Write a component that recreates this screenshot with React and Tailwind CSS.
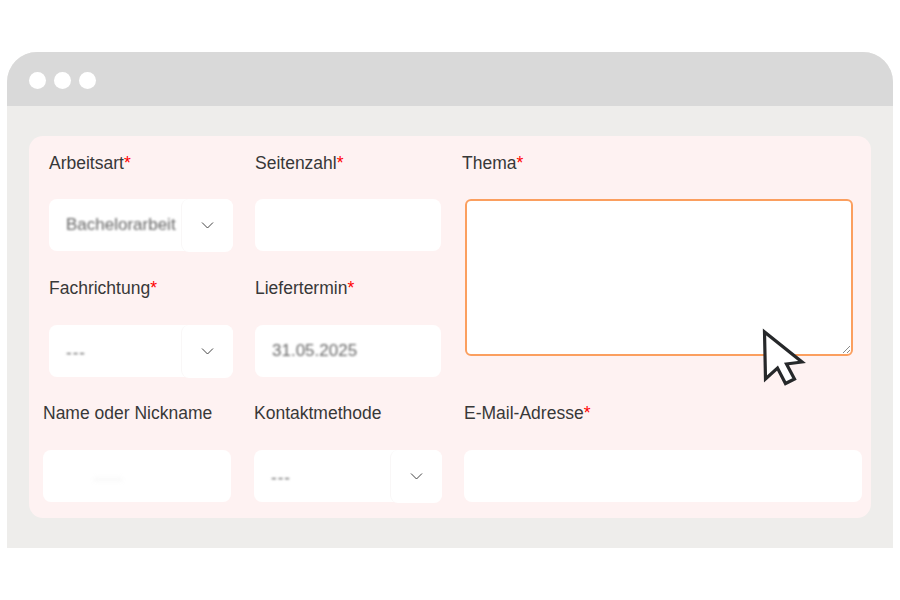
import React from 'react'

const FONT = 'font-["Liberation_Sans",Arial,sans-serif]'

function Label({ text, required, className = '' }) {
  return (
    <div className={`h-6 pt-px text-[17.5px] leading-6 text-[#383838] whitespace-nowrap ${className}`}>
      {text}
      {required && <span className="text-[#f00]">*</span>}
    </div>
  )
}

function Smudge({ className = '' }) {
  return <div className={`absolute rounded-full bg-[#f7f7f7] blur-[2px] ${className}`} />
}

function Select({ value, dash }) {
  return (
    <div className="relative h-[52px] rounded-lg bg-white flex items-center">
      <span className={`pl-[17px] text-[17px] text-[#666] blur-[1px] whitespace-nowrap ${dash ? 'pt-1 tracking-[1px]' : ''}`}>{value}</span>
      <div className="absolute right-0 top-0 h-[53px] w-[52px] rounded-lg bg-white border-l border-[#f9f7f7] flex items-center justify-center">
        <svg width="13" height="13" viewBox="0 0 13 13" fill="none" stroke="#444" strokeWidth="1">
          <path d="M1 3.5 6.5 9 12 3.5" />
        </svg>
      </div>
    </div>
  )
}

function Input({ value, children, className = '' }) {
  return (
    <div className={`relative h-[52px] rounded-lg bg-white flex items-center pl-[17px] overflow-hidden ${className}`}>
      {value && <span className="text-[17px] text-[#666] blur-[1px] whitespace-nowrap">{value}</span>}
      {children}
    </div>
  )
}

export default function App() {
  return (
    <div className={`w-[900px] h-[600px] bg-white pt-[52px] px-[7px] relative overflow-hidden ${FONT}`}>
      <div className="h-[496px] rounded-t-[30px] overflow-hidden bg-[#eeedeb]">
        <div className="h-[54px] bg-[#d9d9d9] flex items-center gap-2 pl-[22px] pt-[2px]">
          <span className="w-[17px] h-[17px] rounded-full bg-white" />
          <span className="w-[17px] h-[17px] rounded-full bg-white" />
          <span className="w-[17px] h-[17px] rounded-full bg-white" />
        </div>

        <div className="pt-[30px] px-[22px]">
          <div className="h-[382px] rounded-[14px] bg-[#fef2f2] pt-[14px]">
            <div className="flex pl-5">
              <div className="grid grid-cols-[184px_186px] gap-x-[22px] w-[392px]">
                <div>
                  <Label text="Arbeitsart" required className="mb-[25px]" />
                  <Select value="Bachelorarbeit" />
                </div>
                <div>
                  <Label text="Seitenzahl" required className="mb-[25px]" />
                  <Input />
                </div>
                <div className="mt-6">
                  <Label text="Fachrichtung" required className="mb-[26px]" />
                  <Select value="---" dash />
                </div>
                <div className="mt-6">
                  <Label text="Liefertermin" required className="mb-[26px]" />
                  <Input value="31.05.2025" />
                </div>
              </div>
              <div className="ml-[21px]">
                <Label text="Thema" required className="mb-[25px]" />
                <div className="ml-[3px] w-[388px] h-[157px] rounded-md bg-white border-2 border-[#fb9f5f] relative">
                  <svg className="absolute right-0 bottom-0" width="9" height="9" viewBox="0 0 9 9" stroke="#8a8a8a" strokeWidth="1">
                    <path d="M1 8 8 1M5 8 8 5" />
                  </svg>
                </div>
              </div>
            </div>

            <div className="flex pl-[14px] mt-[23px]">
              <div className="w-[188px]">
                <Label text="Name oder Nickname" className="mb-[26px]" />
                <Input>
                  <Smudge className="left-[50px] top-[28px] w-[30px] h-[3px]" />
                </Input>
              </div>
              <div className="w-[188px] ml-[23px]">
                <Label text="Kontaktmethode" className="mb-[26px]" />
                <Select value="---" dash />
              </div>
              <div className="w-[398px] ml-[22px]">
                <Label text="E-Mail-Adresse" required className="mb-[26px]" />
                <Input />
              </div>
            </div>
          </div>
        </div>
      </div>

      <svg className="absolute left-[755px] top-[320px]" width="60" height="75" viewBox="755 320 60 75" fill="#fff" stroke="#26282a" strokeWidth="3.2" strokeLinejoin="miter">
        <path d="M764.5 332 765.5 379 777.5 368 785.5 383.5 794.5 379 786.5 364 802 362Z" />
      </svg>
    </div>
  )
}
